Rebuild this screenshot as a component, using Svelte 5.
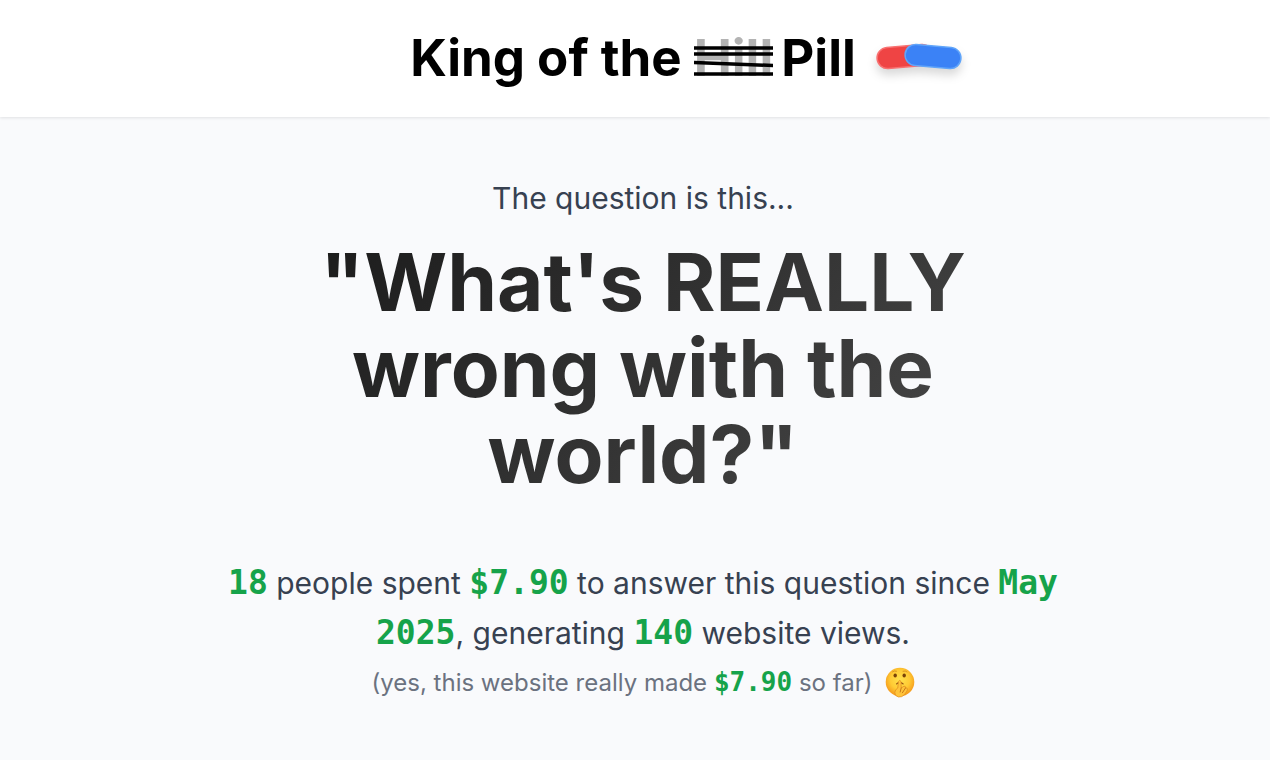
<script lang="ts">
	/**
	 * Landing hero - site title with the pill mark, the question and the running totals
	 */

	const question = `"What's REALLY wrong with the world?"`;

	const stats = {
		people: 18,
		spent: '$7.90',
		month: 'May',
		year: 2025,
		views: 140
	};
</script>

<div class="page">
	<header class="site-header">
		<h1 class="site-title">
			<span>King of the</span>
			<s class="struck">
				Hill
				<svg class="strikes" viewBox="0 0 80 64" preserveAspectRatio="none" aria-hidden="true">
					<path d="M0 22H80M0 28H80M0 36.5 80 39.5M0 48H80" />
				</svg>
			</s>
			<span>Pill</span>
		</h1>
		<svg class="pills" width="104" height="48" viewBox="0 0 104 48" aria-hidden="true">
			<g class="pill red">
				<rect x="9" y="12" width="56" height="21" rx="10.5" transform="rotate(-5 37 22.5)" />
			</g>
			<g class="pill blue">
				<rect x="37" y="12" width="56" height="21" rx="10.5" transform="rotate(5 65 22.5)" />
			</g>
		</svg>
	</header>

	<main class="hero">
		<p class="intro">The question is this...</p>
		<h2 class="question">{question}</h2>

		<p class="stats">
			<strong>{stats.people}</strong> people spent <strong>{stats.spent}</strong> to answer this question since
			<strong>{stats.month}</strong> <strong>{stats.year}</strong>, generating <strong>{stats.views}</strong> website views.
		</p>

		<p class="aside">
			<span>(yes, this website really made <strong>{stats.spent}</strong> so far)</span>
			<svg class="shush" width="30" height="32" viewBox="0 0 30 32" role="img" aria-label="Shushing face">
				<defs>
					<radialGradient id="face" cx="50%" cy="42%" r="56%">
						<stop offset="0" stop-color="#ffe14d" />
						<stop offset="0.6" stop-color="#ffcb35" />
						<stop offset="1" stop-color="#f59a1c" />
					</radialGradient>
				</defs>
				<circle cx="15" cy="15" r="14.3" fill="url(#face)" />
				<ellipse cx="10.2" cy="8.5" rx="1.7" ry="2" fill="#7a4308" />
				<ellipse cx="19.2" cy="8.5" rx="1.7" ry="2" fill="#7a4308" />
				<path d="M7.5 4.8Q9.3 3.4 11.5 4.2M18 4.2Q20.5 3.4 22 4.8" fill="none" stroke="#d18a1d" stroke-width="0.8" stroke-linecap="round" />
				<path d="M11.5 17Q14.7 14.3 18.2 17" fill="none" stroke="#965414" stroke-width="1.1" stroke-linecap="round" />
				<path d="M13.4 14.5Q14.7 12.2 16 14.5L16.2 21 19 19.2Q20.8 18.8 20.5 21L21.8 21Q23 21.5 22 24L19.5 27.5Q17 30.5 13.5 30 9.8 29.2 9.8 25.5 10 22.5 12.8 21Z" fill="#ffc43b" stroke="#e08a1c" stroke-width="0.7" stroke-linejoin="round" />
				<path d="M16.2 21 15.2 25M20.5 21 17.4 25.8" fill="none" stroke="#b8620f" stroke-width="0.8" stroke-linecap="round" />
			</svg>
		</p>
	</main>
</div>

<style>
	:global(body) {
		margin: 0;
		background: #f9fafc;
	}

	.page {
		font-family: Inter, 'Liberation Sans', sans-serif;
		color: #374151;
	}

	.site-header {
		display: flex;
		justify-content: center;
		align-items: center;
		gap: 12px;
		padding: 26px 0 27px 112px;
		background: #fff;
		box-shadow: 0 1px 3px rgba(0, 0, 0, 0.1);
	}

	.site-title {
		display: flex;
		margin: 0;
		font-size: 51px;
		font-weight: 700;
		line-height: 64px;
		color: #000;
	}

	.struck {
		position: relative;
		margin: 0 8px 0 12px;
		color: #b3b3b3;
		text-decoration: none;
	}

	.strikes {
		position: absolute;
		inset: 0;
		width: 100%;
		height: 100%;
		fill: none;
		stroke: #000;
		stroke-width: 3.5;
	}

	.pills {
		overflow: visible;
		filter: drop-shadow(0 6px 5px rgba(0, 0, 0, 0.15));
	}

	.pill {
		stroke-width: 1.5;
	}

	.pill.red {
		fill: #ef4444;
		stroke: #f87171;
	}

	.pill.blue {
		fill: #3b82f6;
		stroke: #60a5fa;
	}

	.hero {
		display: flex;
		flex-direction: column;
		align-items: center;
		padding: 56px 16px 56px 32px;
		text-align: center;
	}

	.intro {
		margin: 0;
		font-size: 30px;
		line-height: 50px;
	}

	.question {
		max-width: 720px;
		margin: 16px 0 0;
		font-size: 80px;
		font-weight: 700;
		line-height: 86px;
		color: transparent;
		background: linear-gradient(135deg, #1a1a1a, #4a4a4a);
		background-clip: text;
	}

	.stats {
		max-width: 860px;
		margin: 61px 0 0;
		font-size: 30px;
		line-height: 50px;
	}

	.stats strong,
	.aside strong {
		font-family: 'DejaVu Sans Mono', 'Liberation Mono', monospace;
		font-size: 33px;
		font-weight: 700;
		line-height: 1;
		color: #16a34a;
	}

	.aside {
		display: flex;
		align-items: center;
		gap: 12px;
		margin: 0;
		font-size: 24px;
		line-height: 50px;
		color: #6b7280;
	}

	.aside strong {
		font-size: 26px;
	}
</style>
